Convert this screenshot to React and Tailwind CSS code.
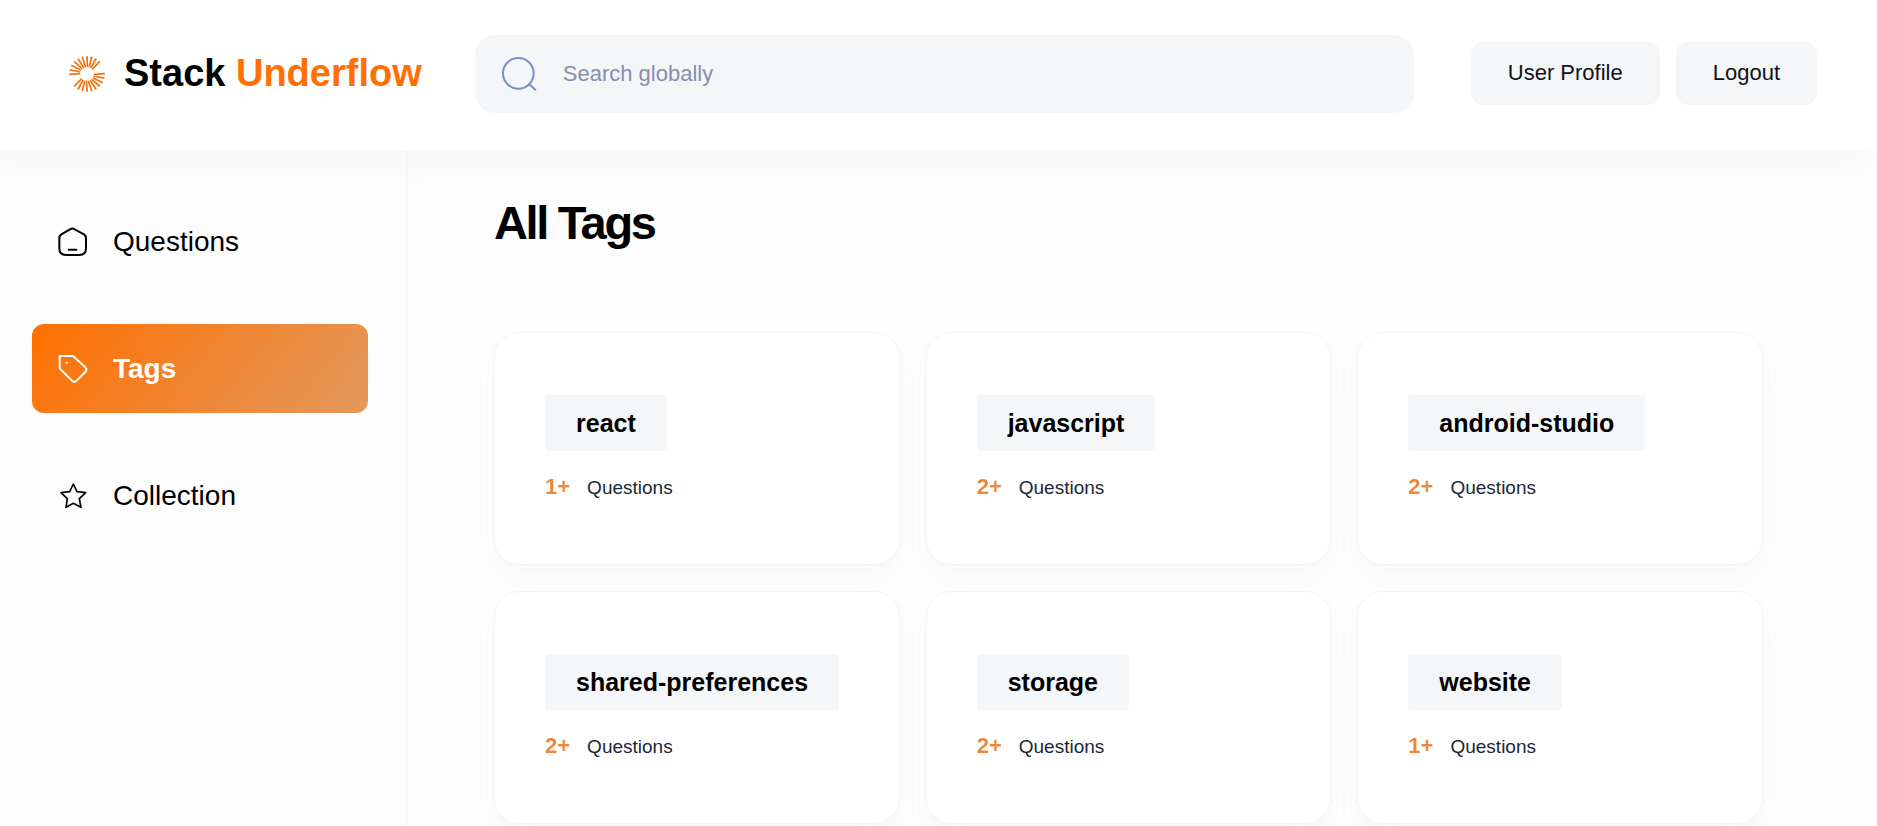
import React from "react";

const TAGS = [
  { name: "react", count: 1 },
  { name: "javascript", count: 2 },
  { name: "android-studio", count: 2 },
  { name: "shared-preferences", count: 2 },
  { name: "storage", count: 2 },
  { name: "website", count: 1 },
];

// Two fans of ten rays each, point-symmetric about the centre.
const RAY_ANGLES = Array.from({ length: 10 }, (_, i) => i * 15.2);

function Logo() {
  return (
    <svg className="size-9 shrink-0" viewBox="-54 -54 108 108" fill="#f27616" aria-hidden="true">
      {[180, 0].map((start) =>
        RAY_ANGLES.map((angle) => (
          <path
            key={`${start}-${angle}`}
            d="M20 -1.5 L51 -4 Q57 -2 53 1.4 L22 3.5 Z"
            transform={`rotate(${start + angle})`}
          />
        ))
      )}
    </svg>
  );
}

function SearchIcon() {
  return (
    <svg className="size-9 shrink-0" viewBox="122 106 108 108" fill="none" stroke="#7b8ec8" strokeWidth="6" strokeLinecap="round" aria-hidden="true">
      <circle cx="174" cy="158" r="46" />
      <path d="M207 191 L225 207" />
    </svg>
  );
}

function HomeIcon() {
  return (
    <svg className="size-[30px] shrink-0" viewBox="174 110 90 90" fill="none" stroke="currentColor" strokeWidth="6" strokeLinecap="round" strokeLinejoin="round" aria-hidden="true">
      <path d="M210 117 Q217 112 224 117 L252 132 Q258 136 258 144 V174 Q258 194 238 194 H198 Q178 194 178 174 V144 Q178 136 184 132 Z" />
      <path d="M206 178 H229" />
    </svg>
  );
}

function TagIcon() {
  return (
    <svg className="size-[30px] shrink-0" viewBox="174 491 90 90" fill="none" stroke="currentColor" strokeWidth="6" strokeLinecap="round" strokeLinejoin="round" aria-hidden="true">
      <path d="M179 497 H219 L256 531 Q262 538 256 545 L230 571 Q223 577 216 571 L179 534 Z" />
      <path d="M200 517 H200.5" />
    </svg>
  );
}

function StarIcon() {
  return (
    <svg className="size-[30px] shrink-0" viewBox="173 872 90 90" fill="none" stroke="currentColor" strokeWidth="5" strokeLinejoin="round" aria-hidden="true">
      <path d="M219 881 L230 904 L256 907 L237 925 L242 951 L219 939 L197 951 L201 925 L182 907 L208 904 Z" />
    </svg>
  );
}

const NAV = [
  { label: "Questions", Icon: HomeIcon },
  { label: "Tags", Icon: TagIcon, active: true },
  { label: "Collection", Icon: StarIcon },
];

function Header() {
  return (
    <header className="relative z-10 flex items-center gap-[53px] bg-white pt-[35px] pr-[60px] pb-[37px] pl-[69px] shadow-[-13px_13px_26px_rgba(218,213,213,0.13)]">
      <a href="#" className="flex items-center gap-[19px] text-[38px] leading-[44px] font-bold text-black">
        <Logo />
        <span className="pb-0.5 whitespace-nowrap">
          Stack <span className="text-[#ff7000]">Underflow</span>
        </span>
      </a>
      <label className="flex h-[78px] min-w-0 flex-1 items-center gap-[26px] rounded-[20px] bg-[#f4f6f8] px-[26px]">
        <SearchIcon />
        <input
          type="text"
          aria-label="Search globally"
          placeholder="Search globally"
          className="min-w-0 flex-1 bg-transparent text-[22px] leading-8 outline-none placeholder:text-[#858ead]"
        />
      </label>
      <div className="flex gap-4 pb-0.5 pl-1">
        <button type="button" className="rounded-xl bg-[#f4f6f8] px-[37px] pt-[15px] pb-[17px] text-[22px] leading-[31px] whitespace-nowrap text-[#0f1117]">
          User Profile
        </button>
        <button type="button" className="rounded-xl bg-[#f4f6f8] px-[37px] pt-[15px] pb-[17px] text-[22px] leading-[31px] whitespace-nowrap text-[#0f1117]">
          Logout
        </button>
      </div>
    </header>
  );
}

function Sidebar() {
  return (
    <nav className="flex w-[407px] shrink-0 flex-col gap-[38px] border-r border-[#f4f4f5] pt-[47px] pr-[38px] pl-8 shadow-[-13px_13px_26px_rgba(218,213,213,0.1)]">
      {NAV.map(({ label, Icon, active }) => (
        <a
          key={label}
          href="#"
          aria-current={active ? "page" : undefined}
          className={
            active
              ? "flex h-[89px] items-center gap-[25px] rounded-xl bg-[linear-gradient(129deg,#ff7000_0%,#e2995f_100%)] px-[26px] text-[28px] font-bold text-white"
              : "flex h-[89px] items-center gap-[25px] rounded-xl px-[26px] text-[28px] text-black"
          }
        >
          <Icon />
          <span>{label}</span>
        </a>
      ))}
    </nav>
  );
}

function TagCard({ name, count }) {
  return (
    <a
      href="#"
      className="flex flex-col items-start rounded-[26px] border border-[#f6f6f7] bg-white px-[50px] pt-[62px] pb-[60px] shadow-[0px_16px_26px_rgba(184,184,184,0.03),0px_8px_16px_rgba(184,184,184,0.02),0px_3px_5px_rgba(184,184,184,0.03)]"
    >
      <h2 className="rounded-[3px] bg-[#f4f6f8] px-[31px] py-3 text-[25px] leading-8 font-bold text-black">
        {name}
      </h2>
      <p className="mt-5 flex items-baseline gap-[17px] text-[19px] leading-8 text-[#212734]">
        <span className="bg-[linear-gradient(129deg,#f8781a_0%,#e2995f_100%)] bg-clip-text text-[22px] font-bold text-transparent">
          {count}+
        </span>
        Questions
      </p>
    </a>
  );
}

export default function App() {
  return (
    <div className="flex min-h-screen flex-col bg-[#fdfdfd] font-['Liberation_Sans',Arial,sans-serif]">
      <Header />
      <div className="flex flex-1">
        <Sidebar />
        <main className="min-w-0 flex-1 pt-[45px] pr-[114px] pl-[87px]">
          <h1 className="text-[47px] leading-[56px] font-bold tracking-tighter text-black">All Tags</h1>
          <section aria-label="Tags" className="mt-[81px] grid grid-cols-3 gap-[26px]">
            {TAGS.map((tag) => (
              <TagCard key={tag.name} {...tag} />
            ))}
          </section>
        </main>
      </div>
    </div>
  );
}
